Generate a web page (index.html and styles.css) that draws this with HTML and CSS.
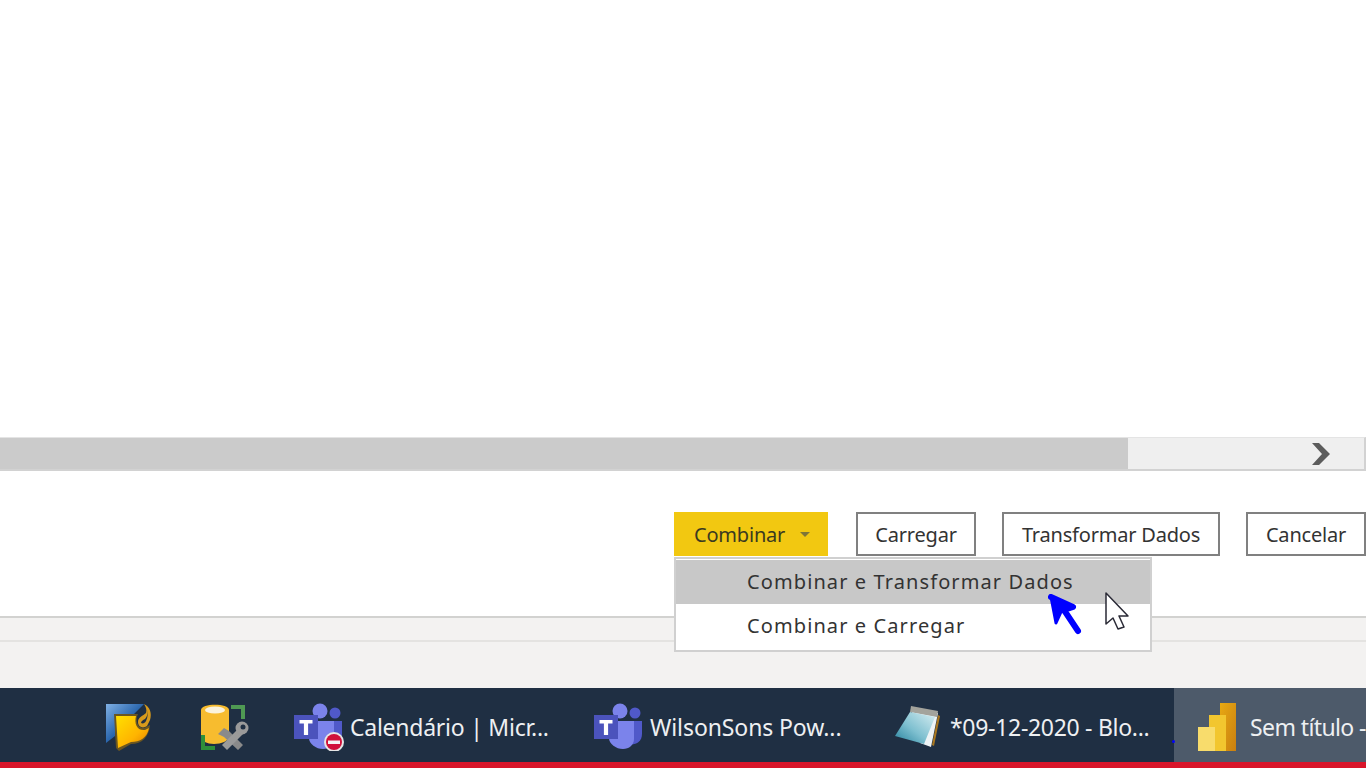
FILE: index.html
```html
<!DOCTYPE html>
<html>
<head>
    <title>Combinar arquivos</title>
    <link rel="stylesheet" href="styles.css">
</head>
<body>
    <div class="preview"></div>

    <div class="hscroll">
        <div class="hscroll-thumb"></div>
        <div class="hscroll-track">
            <svg class="hscroll-arrow" width="20" height="24" viewBox="0 0 20 24">
                <path d="M1 1h7l11 11-11 11H1l10-11z" fill="#5c5c5c"/>
            </svg>
        </div>
    </div>

    <div class="actions">
        <button class="btn btn-primary" type="button">
            Combinar
            <span class="caret"></span>
        </button>
        <button class="btn btn-carregar" type="button">Carregar</button>
        <button class="btn btn-transformar" type="button">Transformar Dados</button>
        <button class="btn btn-cancelar" type="button">Cancelar</button>
    </div>

    <div class="status">
        <div class="status-line"></div>
    </div>

    <div class="taskbar">
        <div class="task task-pin1">
            <svg width="48" height="48" viewBox="0 0 48 48">
                <defs>
                    <linearGradient id="blueFold" x1="0" y1="0" x2="1" y2="1">
                        <stop offset="0" stop-color="#7fb0e4"/>
                        <stop offset="0.5" stop-color="#2a66ad"/>
                        <stop offset="1" stop-color="#123f7a"/>
                    </linearGradient>
                    <linearGradient id="goldFold" x1="0" y1="0" x2="1" y2="1">
                        <stop offset="0" stop-color="#ffe000"/>
                        <stop offset="0.6" stop-color="#ffb400"/>
                        <stop offset="1" stop-color="#e07c00"/>
                    </linearGradient>
                </defs>
                <path d="M1 1h38L29 11H10v22l-9 7z" fill="url(#blueFold)"/>
                <path d="M9 11h24c-3 6-1 14 6 14l6-3c-1 12-8 19-19 19l-12 7-3-3z" fill="#6b5620"/>
                <path d="M11 13h20c-2 8 1 15 9 14l4-2c-2 10-9 14-18 14l-13 6z" fill="url(#goldFold)"/>
                <path d="M39 1c6 3 8 9 6 16l-3 6c-4 3-9 1-9-4 0-5 5-6 8-9 1-3 0-6-2-9z" fill="#d79a1c"/>
                <path d="M42 7c1 4 0 7-2 9-2 1-4 2-4 4 2 1 4 0 5-2 2-4 2-8 1-11z" fill="#1f2f43"/>
            </svg>
        </div>
        <div class="task task-pin2">
            <svg width="50" height="48" viewBox="0 0 50 48">
                <path d="M1 7c0-7 28-7 28 0v26c0 5-8 8-15 8C7 41 1 38 1 33z" fill="#f7bc2f"/>
                <ellipse cx="15" cy="7" rx="10" ry="3.6" fill="#fbf3dc"/>
                <path d="M31 2h14v14h-4V6H31z" fill="#4f9a53"/>
                <path d="M1 32h4v11h10v4H1z" fill="#2f8f3a"/>
                <path d="M18 31l6-6 5 3 14 14-5 5-14-13z" fill="#8a8a8a"/>
                <path d="M27 47l-5-5 16-16 5 5z" fill="#9a9a9a"/>
                <circle cx="42" cy="25" r="6.500" fill="#9a9a9a"/>
                <circle cx="43" cy="24" r="2.500" fill="#1f2f43"/>
            </svg>
        </div>
        <div class="task task-wide">
            <svg width="50" height="48" viewBox="0 0 50 48">
                <circle cx="26" cy="8" r="7.500" fill="#7b83eb"/>
                <circle cx="41" cy="10" r="5.500" fill="#5059c9"/>
                <path d="M33 18h15v13c0 8-7 12-15 10z" fill="#5059c9"/>
                <path d="M15 18h25v18c0 6-5 10-11 10-7 0-14-5-14-11z" fill="#7b83eb"/>
                <rect x="0" y="12" width="24" height="24" fill="#4b53bc"/>
                <path d="M5.500 17h13v3.500h-4.400V32h-4.200V20.500H5.500z" fill="#fff"/>
                <circle cx="40" cy="39" r="10" fill="#e6e6e6"/>
                <circle cx="40" cy="39" r="8" fill="#d0103a"/>
                <rect x="34" y="37.500" width="12" height="3.500" fill="#f4f4f4"/>
            </svg>
            <span class="task-label task-label-calendar">Calendário | Micr...</span>
        </div>
        <div class="task task-wide">
            <svg width="50" height="48" viewBox="0 0 50 48">
                <circle cx="26" cy="8" r="7.500" fill="#7b83eb"/>
                <circle cx="41" cy="10" r="5.500" fill="#5059c9"/>
                <path d="M33 18h15v13c0 8-7 12-15 10z" fill="#5059c9"/>
                <path d="M15 18h25v18c0 6-5 10-11 10-7 0-14-5-14-11z" fill="#7b83eb"/>
                <rect x="0" y="12" width="24" height="24" fill="#4b53bc"/>
                <path d="M5.500 17h13v3.500h-4.400V32h-4.200V20.500H5.500z" fill="#fff"/>
            </svg>
            <span class="task-label task-label-wilson">WilsonSons Pow...</span>
        </div>
        <div class="task task-notepad">
            <svg width="48" height="48" viewBox="0 0 48 48">
                <defs>
                    <linearGradient id="padBlue" x1="1" y1="0" x2="0" y2="1">
                        <stop offset="0" stop-color="#d8eef2"/>
                        <stop offset="0.55" stop-color="#7fc0d0"/>
                        <stop offset="1" stop-color="#23809c"/>
                    </linearGradient>
                </defs>
                <path d="M44 12l2 1-6 30-2-1z" fill="#a8761f"/>
                <path d="M17 5l27 5-7 34-11-4z" fill="#eef3f5"/>
                <path d="M17 3l27 5-1 6-27-5z" fill="#a3a39c"/>
                <path d="M16 9l25 5-11 27L1 33z" fill="url(#padBlue)"/>
            </svg>
            <span class="task-label task-label-notepad">*09-12-2020 - Blo...</span>
        </div>
        <div class="task task-active">
            <svg width="38" height="48" viewBox="0 0 38 48">
                <defs>
                    <linearGradient id="pbi3" x1="0" y1="0" x2="1" y2="1">
                        <stop offset="0" stop-color="#e8a912"/>
                        <stop offset="1" stop-color="#c97f10"/>
                    </linearGradient>
                </defs>
                <rect x="22" y="0" width="16" height="48" fill="url(#pbi3)"/>
                <rect x="11" y="12" width="17" height="36" fill="#f2c62f"/>
                <rect x="0" y="24" width="17" height="24" fill="#f8dc6c"/>
            </svg>
            <span class="task-label task-label-active">Sem título -</span>
        </div>
        <span class="blue-dot"></span>
    </div>
    <div class="redline"></div>

    <div class="menu">
        <div class="menu-item menu-item-hover">Combinar e Transformar Dados</div>
        <div class="menu-item">Combinar e Carregar</div>
    </div>

    <svg class="pen-arrow" width="34" height="44" viewBox="0 0 34 44">
        <path d="M3 3l22 10-9 3 14 21" fill="none" stroke="#0000ff" stroke-width="6" stroke-linecap="round" stroke-linejoin="round"/>
        <path d="M3 3l22 10-12 5-5 11z" fill="#0000ff" stroke="#0000ff" stroke-width="3" stroke-linejoin="round"/>
    </svg>

    <svg class="mouse-cursor" width="26" height="40" viewBox="0 0 26 40">
        <path d="M2 1v31l7-6 5 11 6-2-5-11h9z" fill="#fff" stroke="#2a2a36" stroke-width="1.500" stroke-linejoin="round"/>
    </svg>
</body>
</html>
```

FILE: styles.css
```css
html, body {
    margin: 0;
    padding: 0;
}
body {
    position: relative;
    width: 1366px;
    height: 768px;
    overflow: hidden;
    display: flex;
    flex-direction: column;
    background-color: #fff;
    font-family: "Noto Sans", "Open Sans", sans-serif;
    color: #333;
}
.preview {
    height: 437px;
    background-color: #fff;
}

/* horizontal scrollbar */
.hscroll {
    height: 31px;
    display: flex;
    border-top: 1px solid #e4e4e4;
    border-bottom: 2px solid #d2d2d2;
    border-right: 2px solid #d2d2d2;
    background-color: #efefef;
}
.hscroll-thumb {
    width: 1128px;
    background-color: #cbcbcb;
}
.hscroll-track {
    flex: 1;
    display: flex;
    align-items: center;
    justify-content: flex-end;
    padding-right: 33px;
}

/* buttons */
.actions {
    height: 145px;
    box-sizing: border-box;
    padding-top: 41px;
    display: flex;
    align-items: flex-start;
    padding-left: 674px;
}
.btn {
    height: 44px;
    box-sizing: border-box;
    padding: 0;
    background-color: #fff;
    border: 2px solid #808080;
    font-family: inherit;
    font-size: 20px;
    letter-spacing: -0.2px;
    color: #333;
}
.btn-primary {
    width: 154px;
    margin-right: 28px;
    display: flex;
    align-items: center;
    padding-left: 20px;
    background-color: #f2c811;
    border: 0;
    color: #3b3a20;
}
.caret {
    margin-left: 15px;
    margin-top: 1px;
    border-left: 5px solid transparent;
    border-right: 5px solid transparent;
    border-top: 5px solid #7f7538;
}
.btn-carregar {
    width: 120px;
    margin-right: 26px;
}
.btn-transformar {
    width: 218px;
    margin-right: 26px;
}
.btn-cancelar {
    width: 120px;
}

/* status area */
.status {
    height: 72px;
    box-sizing: border-box;
    border-top: 2px solid #d2d2d0;
    background-color: #f3f2f1;
    padding-top: 22px;
}
.status-line {
    height: 2px;
    background-color: #e4e3e1;
}

/* taskbar */
.taskbar {
    position: relative;
    height: 74px;
    display: flex;
    padding-left: 81px;
    background-color: #1f2f43;
}
.task {
    display: flex;
    align-items: center;
    box-sizing: border-box;
    padding-left: 24px;
    padding-top: 4px;
    flex-shrink: 0;
}
.task svg {
    flex-shrink: 0;
}
.task-pin1 {
    width: 95px;
}
.task-pin2 {
    width: 94px;
}
.task-wide {
    width: 300px;
}
.task-notepad {
    width: 304px;
}
.task-active {
    width: 192px;
    background-color: #4d5a6a;
    overflow: hidden;
}
.task-label {
    font-size: 23px;
    color: #eef0f2;
    white-space: nowrap;
}
.task-label-calendar {
    margin-left: 6px;
    letter-spacing: -0.25px;
}
.task-label-wilson {
    margin-left: 6px;
    letter-spacing: -0.1px;
}
.task-label-notepad {
    margin-left: 8px;
    letter-spacing: -0.3px;
}
.task-label-active {
    margin-left: 14px;
    letter-spacing: -0.6px;
}
.blue-dot {
    position: absolute;
    left: 1172px;
    top: 52px;
    width: 3px;
    height: 3px;
    border-radius: 50%;
    background-color: #0000ff;
}
.redline {
    height: 6px;
    background-color: #d9152a;
}

/* dropdown, lies over the footer */
.menu {
    position: absolute;
    left: 674px;
    top: 557px;
    width: 478px;
    height: 95px;
    box-sizing: border-box;
    padding-top: 1px;
    background-color: #fff;
    border: 2px solid #d0d0d0;
}
.menu-item {
    height: 44px;
    padding-left: 71px;
    line-height: 43px;
    font-size: 20px;
    letter-spacing: 1.1px;
    color: #333;
    white-space: nowrap;
}
.menu-item-hover {
    background-color: #c8c8c8;
}
.pen-arrow {
    position: absolute;
    left: 1048px;
    top: 594px;
}
.mouse-cursor {
    position: absolute;
    left: 1104px;
    top: 592px;
}
```
